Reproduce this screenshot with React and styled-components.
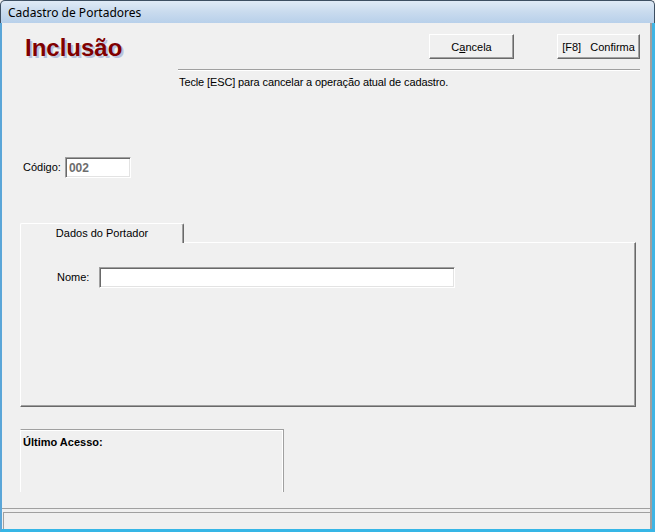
import { createGlobalStyle, styled } from 'styled-components'

const GlobalStyle = createGlobalStyle`
    html, body{
        margin: 0;
        padding: 0;
        background: #f0f0f0;
    }
    *{
        box-sizing: border-box;
    }
`

const Window = styled.div`
    width: 655px;
    height: 532px;
    display: flex;
    flex-direction: column;
    background: #f0f0f0;
    font-family: "Liberation Sans", Arial, sans-serif;
    font-size: 11px;
    color: #000;
    overflow: hidden;
`

const TitleBar = styled.div`
    height: 23px;
    flex-shrink: 0;
    display: flex;
    align-items: center;
    padding-left: 7px;
    background: linear-gradient(to bottom, #dfeaf6 0%, #c9dbee 50%, #b8d0ea 100%);
    border: 1px solid #3d4f62;
    border-bottom: none;
    border-radius: 5px 5px 0 0;
    font-family: "Segoe UI", "Noto Sans", sans-serif;
    font-size: 12px;
    color: #000;
`

const Frame = styled.div`
    flex: 1;
    display: flex;
    flex-direction: column;
    border-left: 2px solid #5aa6d8;
    border-right: 3px solid #3fb4e4;
    border-bottom: 3px solid #36b6e6;
    box-shadow: inset -1px 0 0 #a0a0a0, inset -2px 0 0 #f0f0f0;
`

const Client = styled.div`
    flex: 1;
    display: flex;
    flex-direction: column;
    border-right: 1px solid #a0a0a0;
    margin-right: 1px;
`

const Header = styled.div`
    display: flex;
    padding-left: 23px;
    padding-right: 10px;
`

const Heading = styled.h1`
    width: 153px;
    margin: 13px 0 0;
    font-family: "Liberation Sans", Arial, sans-serif;
    font-size: 24px;
    line-height: 24px;
    font-weight: bold;
    color: #800000;
    text-shadow: 2px 2px 0 #b7c3dc;
`

const HeaderRight = styled.div`
    flex: 1;
    display: flex;
    flex-direction: column;
    padding-top: 11px;
`

const ButtonRow = styled.div`
    display: flex;
    justify-content: flex-end;
    gap: 43px;
`

const Button = styled.button`
    width: ${p => p.$w}px;
    height: 25px;
    padding: 0;
    background: #f0f0f0;
    border: 1px solid;
    border-color: #fff #696969 #696969 #fff;
    box-shadow: inset -1px -1px 0 #a0a0a0;
    font-family: "Liberation Sans", Arial, sans-serif;
    font-size: 11px;
    color: #000;
    white-space: pre;
`

const Separator = styled.div`
    margin-top: 10px;
    border-top: 1px solid #a0a0a0;
    border-bottom: 1px solid #fff;
`

const Hint = styled.div`
    margin-top: 5px;
    margin-left: 1px;
    line-height: 13px;
    letter-spacing: -0.12px;
`

const FieldRow = styled.div`
    display: flex;
    align-items: center;
    gap: ${p => p.$gap}px;
    margin: ${p => p.$margin};
`

const Label = styled.span`
    line-height: 13px;
`

const Input = styled.div`
    width: ${p => p.$w}px;
    height: 21px;
    display: flex;
    align-items: center;
    padding-left: 3px;
    background: #fff;
    border: 1px solid;
    border-color: #a0a0a0 #fff #fff #a0a0a0;
    box-shadow: inset 1px 1px 0 #696969, inset -1px -1px 0 #e3e3e3;
    color: #6d6d6d;
    font-size: 12px;
    font-weight: bold;
`

const Tabs = styled.div`
    margin: 45px 0 0 18px;
    width: 616px;
    display: flex;
    flex-direction: column;
`

const Tab = styled.div`
    width: 164px;
    height: 20px;
    display: flex;
    align-items: center;
    justify-content: center;
    border-top: 1px solid #fff;
    border-left: 1px solid #fff;
    border-right: 1px solid #696969;
    box-shadow: inset -1px 0 0 #a0a0a0;
    border-radius: 2px 2px 0 0;
    position: relative;
    z-index: 1;
    margin-bottom: -1px;
    background: #f0f0f0;
    padding-bottom: 2px;
`

const TabPanel = styled.div`
    height: 165px;
    border-top: 1px solid #fff;
    border-left: 1px solid #fff;
    border-right: 1px solid #696969;
    border-bottom: 1px solid #696969;
    box-shadow: inset -1px -1px 0 #a0a0a0;
    padding: 24px 0 0 36px;
`

const GroupBox = styled.div`
    margin: 22px 0 0 18px;
    width: 264px;
    height: 63px;
    border-top: 1px solid #a0a0a0;
    border-right: 1px solid #a0a0a0;
    border-left: 1px solid #fff;
    box-shadow: inset 0 1px 0 #fff, inset -1px 0 0 #fff;
    padding: 6px 0 0 2px;
`

const GroupTitle = styled.span`
    font-weight: bold;
    font-size: 11px;
    line-height: 13px;
`

const StatusArea = styled.div`
    margin-top: auto;
    border-top: 1px solid #a0a0a0;
    padding-top: 3px;
`

const StatusPanel = styled.div`
    height: 17px;
    margin-left: 1px;
    border-top: 1px solid #a0a0a0;
    border-left: 1px solid #a0a0a0;
`

const Underline = styled.span`
    text-decoration: underline;
`

function App(){
    return(
        <>
            <GlobalStyle/>
            <Window>
                <TitleBar>Cadastro de Portadores</TitleBar>
                <Frame>
                    <Client>
                        <Header>
                            <Heading>Inclusão</Heading>
                            <HeaderRight>
                                <ButtonRow>
                                    <Button $w={85}>C<Underline>a</Underline>ncela</Button>
                                    <Button $w={83}>[F8]   Confirma</Button>
                                </ButtonRow>
                                <Separator/>
                                <Hint>Tecle [ESC] para cancelar a operação atual de cadastro.</Hint>
                            </HeaderRight>
                        </Header>

                        <FieldRow $gap={4} $margin="68px 0 0 21px">
                            <Label>Código:</Label>
                            <Input $w={66}>002</Input>
                        </FieldRow>

                        <Tabs>
                            <Tab>Dados do Portador</Tab>
                            <TabPanel>
                                <FieldRow $gap={10} $margin="0">
                                    <Label>Nome:</Label>
                                    <Input $w={356}/>
                                </FieldRow>
                            </TabPanel>
                        </Tabs>

                        <GroupBox>
                            <GroupTitle>Último Acesso:</GroupTitle>
                        </GroupBox>

                        <StatusArea>
                            <StatusPanel/>
                        </StatusArea>
                    </Client>
                </Frame>
            </Window>
        </>
    )
}

export default App
